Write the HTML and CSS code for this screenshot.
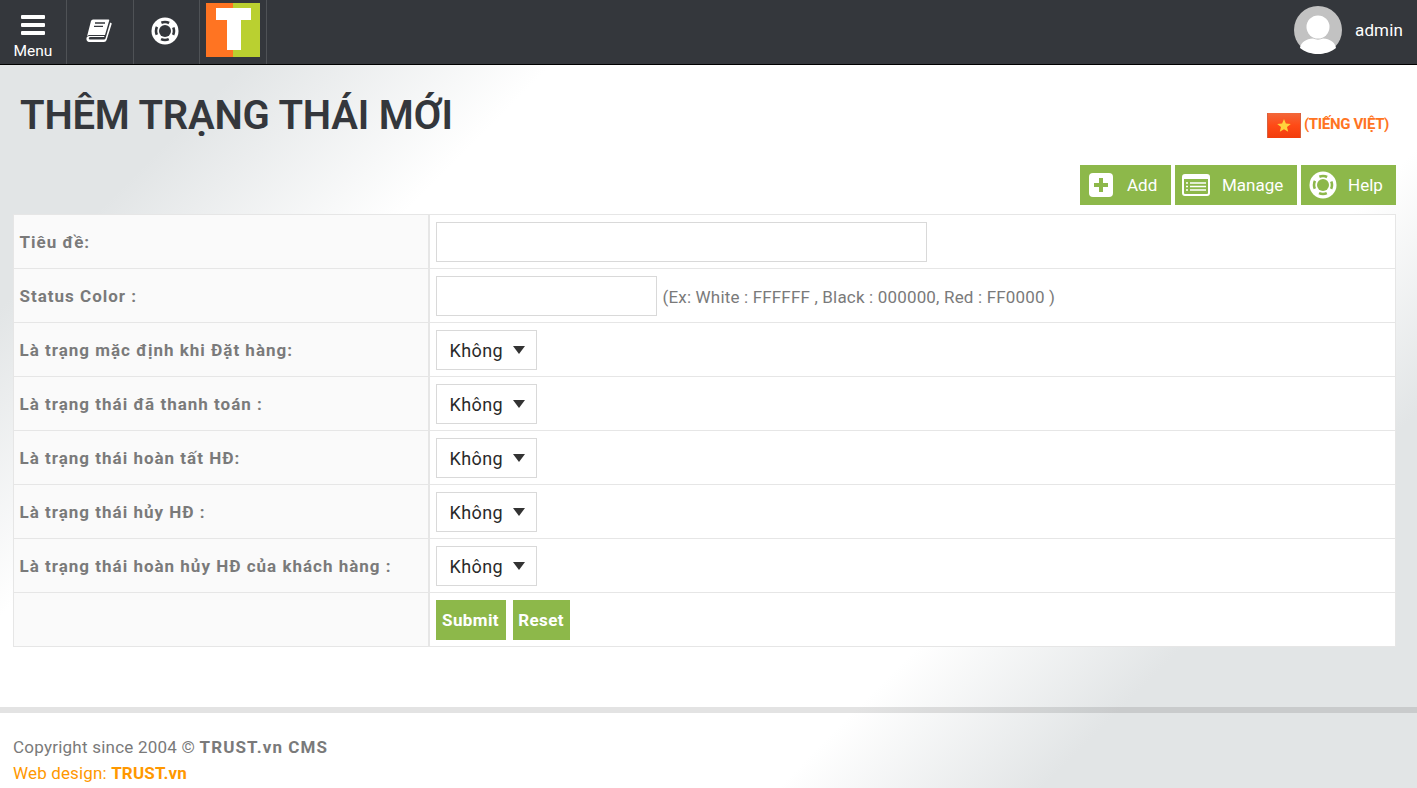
FILE: index.html
```html
<!DOCTYPE html>
<html lang="vi">
<head>
<meta charset="utf-8">
<title>Thêm trạng thái mới</title>
<link rel="stylesheet" href="styles.css">
</head>
<body>
<header class="topbar">
  <a class="tb-item tb-menu">
    <svg class="ic-burger" viewBox="0 0 24 20"><rect y="0" width="24" height="4" rx="1"/><rect y="8" width="24" height="4" rx="1"/><rect y="16" width="24" height="4" rx="1"/></svg>
    <span>Menu</span>
  </a>
  <a class="tb-item">
    <svg class="ic-book" viewBox="0 0 26 23"><path fill="#fff" d="M7 .5H22.500Q23.500 .5 23.200 1.500L19 16H3Q2 16 1 17.500L5 2Q5.500 .5 7 .5Z"/><path fill="#fff" d="M.6 18.500C0 21 1 23 4 23H18Q20 23 20.600 21L25.800 4.500L24.200 3.500L19.500 19.500Q19.200 20.500 18 20.500H4Q2.500 20.500 2.800 19Q3 18 4.500 18H18L18.500 17H3Q1.500 17 .6 18.500Z"/><path stroke="#34373c" stroke-width="1.300" d="M9 4H19M8 7.300H17"/></svg>
  </a>
  <a class="tb-item">
    <svg class="ic-ring" viewBox="0 0 28 28"><circle cx="14" cy="14" r="13.500" fill="#fff"/><circle cx="14" cy="14" r="6" fill="#34373c"/><circle cx="14" cy="14" r="9" fill="none" stroke="#34373c" stroke-width="2.600" stroke-dasharray="8 6.137" stroke-dashoffset="4"/></svg>
  </a>
  <a class="tb-item tb-logo">
    <svg class="logo" viewBox="0 0 54 54"><rect width="27" height="54" fill="#ff7422"/><rect x="27" width="27" height="54" fill="#bad030"/><path fill="#fff" d="M10 5H45V17H35V47H21V17H10Z"/></svg>
  </a>
  <div class="tb-user">
    <svg class="avatar" viewBox="0 0 48 48"><circle cx="24" cy="24" r="24" fill="#c2c2c2"/><circle cx="24" cy="21" r="11.500" fill="#fff"/><path fill="#fff" d="M6 42C7 36 12 33 19 32.500C22 34 26 34 29 32.500C36 33 41 36 42 42C37.500 45.800 31 48 24 48C17 48 10.500 45.800 6 42Z"/></svg>
    <span class="username">admin</span>
  </div>
</header>

<main class="content">
  <div class="title-row">
    <h1>THÊM TRẠNG THÁI MỚI</h1>
    <div class="lang">
      <svg class="flag" viewBox="0 0 34 25"><defs><linearGradient id="fg" x1="0" y1="0" x2="0" y2="1"><stop offset="0" stop-color="#f2683a"/><stop offset=".5" stop-color="#ff4a16"/><stop offset="1" stop-color="#f23c0c"/></linearGradient></defs><rect width="34" height="25" fill="url(#fg)"/><rect width="1" height="25" fill="#d8603e"/><rect x="33" width="1" height="25" fill="#d8603e"/><polygon fill="#ffd23c" points="17,6 18.900,10.600 23.800,10.900 20,14 21.200,18.800 17,16.200 12.800,18.800 14,14 10.200,10.900 15.100,10.600"/></svg>
      <span>(TIẾNG VIỆT)</span>
    </div>
  </div>

  <div class="actions">
    <a class="act act-add">
      <svg class="act-ic" viewBox="0 0 24 24"><rect width="24" height="24" rx="4" fill="#fff"/><path d="M12 5V19M5 12H19" stroke="#8db84a" stroke-width="4"/></svg>
      <span>Add</span>
    </a>
    <a class="act act-manage">
      <svg class="act-ic act-ic-wide" viewBox="0 0 28 22"><rect x="1" y="1" width="26" height="20" rx="2" fill="none" stroke="#fff" stroke-width="2"/><rect x="1" y="1" width="26" height="4" fill="#fff"/><path d="M4 9H6M8 9H24M4 12.500H6M8 12.500H24M4 16H6M8 16H24" stroke="#fff" stroke-width="1.500"/></svg>
      <span>Manage</span>
    </a>
    <a class="act act-help">
      <svg class="act-ic act-ic-ring" viewBox="0 0 28 28"><circle cx="14" cy="14" r="13.500" fill="#fff"/><circle cx="14" cy="14" r="6" fill="#8db84a"/><circle cx="14" cy="14" r="9" fill="none" stroke="#8db84a" stroke-width="2.600" stroke-dasharray="8 6.137" stroke-dashoffset="4"/></svg>
      <span>Help</span>
    </a>
  </div>

  <table class="form-table">
    <tr><th>Tiêu đề:</th><td><input class="inp inp-title" type="text"></td></tr>
    <tr><th>Status Color :</th><td><input class="inp inp-color" type="text"><span class="hint">(Ex: White : FFFFFF , Black : 000000, Red : FF0000 )</span></td></tr>
    <tr><th>Là trạng mặc định khi Đặt hàng:</th><td><div class="sel">Không<i class="caret"></i></div></td></tr>
    <tr><th>Là trạng thái đã thanh toán :</th><td><div class="sel">Không<i class="caret"></i></div></td></tr>
    <tr><th>Là trạng thái hoàn tất HĐ:</th><td><div class="sel">Không<i class="caret"></i></div></td></tr>
    <tr><th>Là trạng thái hủy HĐ :</th><td><div class="sel">Không<i class="caret"></i></div></td></tr>
    <tr><th>Là trạng thái hoàn hủy HĐ của khách hàng :</th><td><div class="sel">Không<i class="caret"></i></div></td></tr>
    <tr><th></th><td><div class="btns"><button class="btn btn-submit" type="button">Submit</button><button class="btn btn-reset" type="button">Reset</button></div></td></tr>
  </table>
</main>

<footer class="footer">
  <p class="copy">Copyright since 2004 © <b>TRUST.vn CMS</b></p>
  <p class="design">Web design: <b>TRUST.vn</b></p>
</footer>
</body>
</html>
```

FILE: styles.css
```css
* { box-sizing: border-box; }
html, body { margin: 0; padding: 0; }
body {
  width: 1417px;
  height: 788px;
  overflow: hidden;
  font-family: Roboto, "Liberation Sans", sans-serif;
  color: #7a7a7a;
  background: linear-gradient(135deg, #e2e5e6 0, #e2e5e6 14%, #ffffff 28%, #ffffff 71%, #e2e5e6 83%, #e2e5e6 100%);
}
.topbar {
  height: 65px;
  display: flex;
  background: #34373c;
  border-bottom: 1px solid #000;
}
.tb-item {
  width: 66.750px;
  height: 64px;
  border-right: 1px solid #4f5256;
  display: flex;
  flex-direction: column;
  align-items: center;
  justify-content: center;
  color: #fff;
}
.tb-menu { justify-content: flex-start; padding-top: 15px; font-size: 15.500px; line-height: 18px; }
.ic-burger { width: 24px; height: 20px; fill: #fff; margin-bottom: 7px; }
.ic-book { width: 26px; height: 23px; margin: 0 2px 3px 0; }
.ic-ring { width: 28px; height: 28px; margin: 0 2px 3px 0; }
.tb-logo { justify-content: flex-start; padding-top: 3px; }
.logo { width: 54px; height: 54px; display: block; }
.tb-user { margin-left: auto; display: flex; align-items: center; padding: 0 14px 5px 0; }
.avatar { width: 48px; height: 48px; margin-right: 13px; }
.username { color: #fff; font-size: 17px; letter-spacing: .15px; }

.content { padding: 0 21px 0 13px; }
.title-row { display: flex; justify-content: space-between; height: 100px; }
h1 {
  margin: 27px 0 0 7px;
  font-size: 40px;
  line-height: 47px;
  font-weight: 600;
  letter-spacing: -.2px;
  color: #34373c;
}
.lang {
  display: flex;
  align-items: center;
  height: 25px;
  margin: 48px 7px 0 0;
  font-size: 15px;
  font-weight: 700;
  letter-spacing: -.35px;
  color: #ff7422;
}
.lang span { position: relative; top: -2px; }
.flag { width: 34px; height: 25px; margin-right: 3px; }
.actions { display: flex; justify-content: flex-end; gap: 4px; height: 40px; }
.act {
  height: 40px;
  display: flex;
  align-items: center;
  background: #8db84a;
  color: #fff;
  font-size: 17px;
}
.act-add { width: 91px; padding-left: 9px; }
.act-manage { width: 122px; padding-left: 7px; }
.act-help { width: 95px; padding-left: 8px; }
.act-ic { width: 24px; height: 24px; margin-right: 14px; }
.act-ic-wide { width: 28px; height: 22px; margin-right: 12px; }
.act-ic-ring { width: 28px; height: 28px; margin-right: 11px; }

.form-table {
  width: 1383px;
  margin-top: 9px;
  border-collapse: collapse;
  table-layout: fixed;
  border: 1px solid #e6e6e6;
}
.form-table th, .form-table td {
  height: 54px;
  border: 1px solid #e6e6e6;
  vertical-align: middle;
  background: #fff;
}
.form-table th {
  width: 415px;
  padding: 0 0 0 5.500px;
  background: #fafafa;
  text-align: left;
  font-size: 17px;
  font-weight: 700;
  letter-spacing: 1px;
  color: #7a7a7a;
  border-right-width: 2px;
}
.form-table td { padding: 0 6px; }
.inp {
  display: inline-block;
  height: 40px;
  border: 1px solid #d9d9d9;
  background: #fff;
  vertical-align: middle;
  padding: 0;
  margin: 0;
}
.inp-title { width: 491px; }
.inp-color { width: 221px; }
.hint { margin-left: 6px; font-size: 17px; letter-spacing: .17px; vertical-align: middle; color: #7a7a7a; position: relative; top: 1px; }
.sel {
  width: 101px;
  height: 40px;
  border: 1px solid #d9d9d9;
  background: #fff;
  display: flex;
  align-items: center;
  padding: 2px 0 0 13px;
  font-size: 18px;
  letter-spacing: .4px;
  color: #2a2a2a;
  position: relative;
}
.caret {
  position: absolute;
  right: 11px;
  top: 15px;
  border-left: 6px solid transparent;
  border-right: 6px solid transparent;
  border-top: 8px solid #333;
}
.btns { display: flex; gap: 7px; }
.btn {
  height: 40px;
  padding: 0;
  border: 0;
  background: #8db84a;
  color: #fff;
  font-family: inherit;
  font-size: 17px;
  font-weight: 700;
  letter-spacing: .4px;
}
.btn-submit { width: 70px; }
.btn-reset { width: 57px; }

.footer {
  margin-top: 60px;
  border-top: 6px solid rgba(0, 0, 0, .11);
  padding: 21px 13px 0;
  font-size: 17px;
  line-height: 26px;
}
.footer p { margin: 0; }
.copy { letter-spacing: .23px; }
.copy b { letter-spacing: 1.100px; }
.design { color: #ff9800; letter-spacing: .15px; }
```
